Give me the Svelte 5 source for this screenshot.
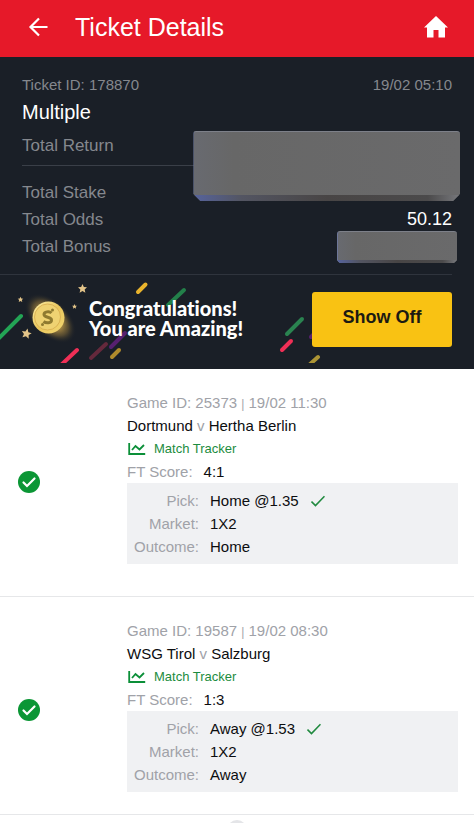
<script lang="ts">
    let ticket = {
        id: '178870',
        date: '19/02 05:10',
        type: 'Multiple',
        odds: '50.12',
    };

    let games = [
        {
            id: '25373',
            date: '19/02 11:30',
            home: 'Dortmund',
            away: 'Hertha Berlin',
            score: '4:1',
            pick: 'Home @1.35',
            market: '1X2',
            outcome: 'Home',
        },
        {
            id: '19587',
            date: '19/02 08:30',
            home: 'WSG Tirol',
            away: 'Salzburg',
            score: '1:3',
            pick: 'Away @1.53',
            market: '1X2',
            outcome: 'Away',
        },
    ];

    const star = 'M0 -5 L1.5 -1.7 L5 -1.4 L2.4 1 L3.2 4.6 L0 2.7 L-3.2 4.6 L-2.4 1 L-5 -1.4 L-1.5 -1.7 Z';
</script>

<div class="page">
    <header class="topbar">
        <button class="icon-button" type="button" aria-label="Back">
            <svg width="20" height="20" viewBox="0 0 20 20" fill="none" stroke="#fff" stroke-width="2.2">
                <path d="M19.500 10H2.500M11 1.500L2.500 10l8.500 8.500" />
            </svg>
        </button>
        <h1>Ticket Details</h1>
        <a class="home" href="#home" aria-label="Home">
            <svg width="24" height="22" viewBox="0 0 24 22" fill="#fff">
                <path d="M12 0L0 11.500h3V21.500h6.500V14h5v7.500H21V11.500h3z" />
            </svg>
        </a>
    </header>

    <section class="summary">
        <div class="row meta">
            <span>Ticket ID: {ticket.id}</span>
            <span>{ticket.date}</span>
        </div>
        <h2>{ticket.type}</h2>
        <div class="row return">
            <span>Total Return</span>
            <div class="cover cover-large"></div>
        </div>
        <div class="totals">
            <div class="row"><span>Total Stake</span></div>
            <div class="row"><span>Total Odds</span><span class="value">{ticket.odds}</span></div>
            <div class="row">
                <span>Total Bonus</span>
                <div class="cover cover-small"></div>
            </div>
        </div>
    </section>

    <section class="banner">
        <svg class="confetti" width="330" height="88" viewBox="0 0 330 88" aria-hidden="true">
            <defs>
                <radialGradient id="glow">
                    <stop offset="0.4" stop-color="#c9a24a" stop-opacity="0.9" />
                    <stop offset="0.7" stop-color="#8d7239" stop-opacity="0.5" />
                    <stop offset="1" stop-color="#1a1f27" stop-opacity="0" />
                </radialGradient>
                <linearGradient id="coin" x1="0" y1="0" x2="1" y2="1">
                    <stop offset="0" stop-color="#fdf0a8" />
                    <stop offset="0.5" stop-color="#e9c65c" />
                    <stop offset="1" stop-color="#f3d873" />
                </linearGradient>
            </defs>
            <g stroke-width="4" stroke-linecap="round">
                <path d="M21 41L-1 63" stroke="#23a455" />
                <path d="M145.500 9.500L138 17" stroke="#e9b32c" />
                <path d="M184 15L168 30" stroke="#23804a" />
                <path d="M77 75L60 91" stroke="#f02f56" />
                <path d="M106 69L91 83" stroke="#65293c" />
                <path d="M125 58L111 72" stroke="#57206f" />
                <path d="M119 75L112 82" stroke="#b08b2c" />
                <path d="M302 44L287 59" stroke="#2a8350" />
                <path d="M291 66L282 75" stroke="#f02f56" />
                <path d="M315 58L311 62" stroke="#57206f" />
                <path d="M318 82L308 91" stroke="#ac9435" />
            </g>
            <ellipse cx="50.500" cy="43" rx="31" ry="18" fill="url(#glow)" transform="rotate(43 50 43)" />
            <circle cx="48.500" cy="42.500" r="16" fill="url(#coin)" />
            <circle cx="47.500" cy="42" r="13" fill="#efd272" stroke="#d2a548" stroke-width="0.7" />
            <path d="M51.500 38c-2-2-7.500-1.500-7.500 1.500 0 3.500 7.500 2 7.500 5.500 0 3.500-5.500 3.500-8 1.500" fill="none" stroke="#8f7a30" stroke-width="3" />
            <circle cx="52.500" cy="35" r="1.500" fill="#8f7a30" />
            <circle cx="42.500" cy="49.500" r="1.500" fill="#8f7a30" />
            <g fill="#e3c489">
                <path d={star} transform="translate(82.500 13.500) scale(0.9)" />
                <path d={star} transform="translate(20.500 24.500) scale(0.55)" />
                <path d={star} transform="translate(74.500 31.500) scale(0.5)" />
                <path d={star} transform="translate(26.500 58.500) rotate(12)" />
            </g>
        </svg>
        <p>Congratulations!<br />You are Amazing!</p>
        <button class="show-off" type="button">Show Off</button>
    </section>

    <main class="games">
        {#each games as game}
            <article class="game">
                <div class="status">
                    <svg width="22" height="22" viewBox="0 0 22 22" role="img" aria-label="Won">
                        <circle cx="11" cy="11" r="11" fill="#0b9635" />
                        <path d="M5.500 11.500l3.500 3.500 7.500-7.500" fill="none" stroke="#fff" stroke-width="2.2" stroke-linecap="round" />
                    </svg>
                </div>
                <div class="details">
                    <div class="line muted">Game ID: {game.id} <span class="sep">|</span> {game.date}</div>
                    <div class="line">{game.home} <span class="muted">v</span> {game.away}</div>
                    <a class="line tracker" href="#tracker">
                        <svg width="18" height="12" viewBox="0 0 18 12" fill="none" stroke="#0b8f38" stroke-width="1.8">
                            <path d="M1.200 0v11h16" />
                            <path d="M4 7l3.500-4 4 3.500L16 2" />
                        </svg>
                        Match Tracker
                    </a>
                    <div class="line score"><span class="muted">FT Score:</span>{game.score}</div>
                    <dl class="pick">
                        <dt>Pick:</dt>
                        <dd>
                            {game.pick}
                            <svg width="14" height="12" viewBox="0 0 14 12" fill="none" stroke="#208a3f" stroke-width="1.6">
                                <path d="M0.500 6.500l4 4L13.500 1.200" />
                            </svg>
                        </dd>
                        <dt>Market:</dt>
                        <dd>{game.market}</dd>
                        <dt>Outcome:</dt>
                        <dd>{game.outcome}</dd>
                    </dl>
                </div>
            </article>
        {/each}
    </main>

    <div class="more">
        <svg width="20" height="20" viewBox="0 0 20 20" aria-hidden="true">
            <circle cx="10" cy="10" r="10" fill="#e4e5e8" />
        </svg>
    </div>
</div>

<style>
    :global(body) {
        margin: 0;
        background: #fff;
    }

    .page {
        font-family: 'Liberation Sans', Arial, Helvetica, sans-serif;
        font-size: 15px;
        color: #0c0d0f;
    }

    h1, h2, p, dl, dd {
        margin: 0;
        font-weight: normal;
    }

    svg {
        display: block;
        flex: none;
    }

    .topbar {
        display: flex;
        align-items: center;
        padding: 0 26px 3px 28px;
        height: 54px;
        background: #e61929;
        color: #fff;
    }

    .topbar h1 {
        flex: 1;
        margin-left: 27px;
        font-size: 25px;
        line-height: 28px;
    }

    .icon-button {
        padding: 0;
        border: 0;
        background: none;
        cursor: pointer;
    }

    .summary {
        padding: 17px 22px 0 22px;
        background: #1a1f27;
        color: #85888e;
        font-size: 17px;
    }

    .row {
        position: relative;
        display: flex;
        justify-content: space-between;
        line-height: 27px;
    }

    .meta {
        font-size: 15px;
        line-height: 22px;
    }

    .summary h2 {
        color: #fff;
        font-size: 20px;
        line-height: 33px;
    }

    .return {
        padding-bottom: 3px;
        border-bottom: 1px solid #3a3f48;
        line-height: 33px;
    }

    .totals {
        margin-left: -22px;
        padding: 13px 0 14px 22px;
        border-bottom: 1px solid #2f343d;
    }

    .value {
        color: #fff;
        font-size: 18px;
    }

    /* blanked-out amounts */
    .cover {
        position: absolute;
        box-sizing: border-box;
        border-top: 1px solid #7d8089;
        border-left: 1px solid #6d7698;
        border-radius: 3px;
        background:
            linear-gradient(90deg, #56639c, #535562 18%, #484545 50%, #4b4a4b 88%, #77787c) bottom / 100% 6px no-repeat,
            linear-gradient(90deg, #686a70, #676767 15%, #6a6a6b);
        clip-path: polygon(0 0, 100% 0, 100% calc(100% - 7px), calc(100% - 7px) 100%, 7px 100%, 0 calc(100% - 7px));
    }

    .cover-large {
        top: 2px;
        right: -8px;
        width: 62%;
        height: 70px;
    }

    .cover-small {
        top: -2px;
        right: -5px;
        width: 28%;
        height: 32px;
        background-size: 100% 3px, auto;
        clip-path: polygon(0 0, 100% 0, 100% calc(100% - 3px), calc(100% - 3px) 100%, 3px 100%, 0 calc(100% - 3px));
    }

    .banner {
        position: relative;
        display: flex;
        align-items: center;
        justify-content: space-between;
        padding: 17px 22px 22px 89px;
        background: #1a1f27;
    }

    .confetti {
        position: absolute;
        top: 0;
        left: 0;
    }

    .banner p {
        position: relative;
        padding-bottom: 4px;
        color: #fff;
        font-family: Lato, 'Open Sans', sans-serif;
        font-size: 20px;
        font-variant-ligatures: none;
        font-weight: 900;
        line-height: 20px;
        white-space: nowrap;
    }

    .show-off {
        position: relative;
        width: 140px;
        padding: 15px 0 19px;
        border: 0;
        border-radius: 3px;
        background: #f9c213;
        color: #1c1a12;
        font-family: inherit;
        font-size: 18px;
        font-weight: bold;
        line-height: 21px;
        cursor: pointer;
    }

    .game {
        display: flex;
        padding: 22px 16px 32px 18px;
        border-bottom: 1px solid #e6e7e9;
    }

    .game:last-child {
        padding-bottom: 22px;
    }

    .status {
        display: flex;
        align-items: center;
        width: 109px;
        padding-top: 8px;
    }

    .details {
        flex: 1;
    }

    .line {
        line-height: 23px;
    }

    .muted, .pick dt {
        color: #a0a2a8;
    }

    .sep {
        font-size: 12px;
        line-height: 1;
    }

    .tracker {
        display: flex;
        align-items: center;
        gap: 8px;
        padding-left: 1px;
        color: #1c8c40;
        font-size: 13px;
        text-decoration: none;
    }

    .score {
        display: flex;
        gap: 11px;
    }

    .pick {
        display: grid;
        grid-template-columns: 72px 1fr;
        column-gap: 11px;
        padding: 6px 0;
        background: #f0f1f3;
        line-height: 23px;
    }

    .pick dt {
        text-align: right;
    }

    .pick dd {
        display: flex;
        align-items: center;
        gap: 12px;
    }

    .more {
        display: flex;
        justify-content: center;
        height: 3px;
        padding-top: 5px;
        overflow: hidden;
    }
</style>
